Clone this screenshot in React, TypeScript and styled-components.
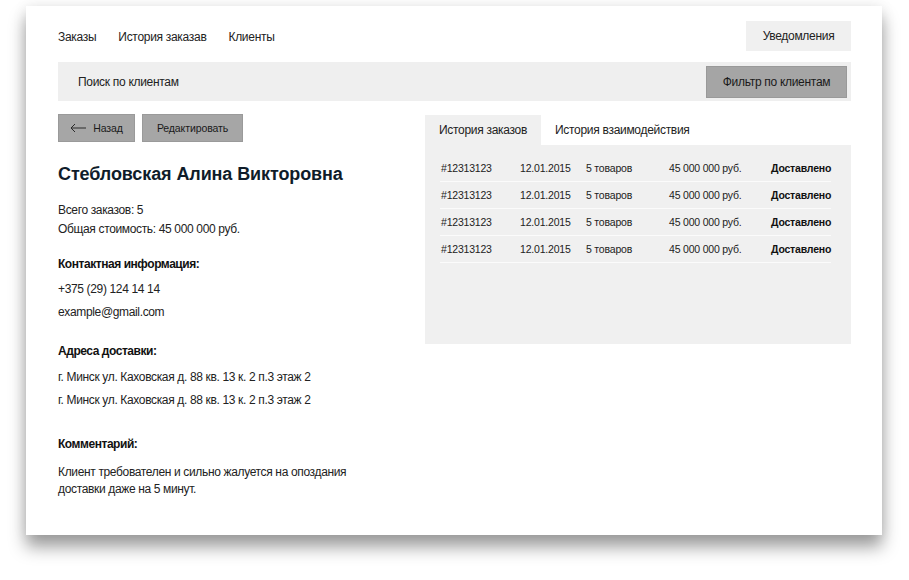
import styled, { createGlobalStyle } from 'styled-components';

const GlobalStyle = createGlobalStyle`
  html, body {
    margin: 0;
    padding: 0;
    background: #ffffff;
  }
  body {
    font-family: "Liberation Sans", Arial, sans-serif;
    color: #1d2a36;
  }
`;

const Page = styled.div`
  padding: 6px 27px 45px 26px;
`;

const Card = styled.div`
  background: #fff;
  height: 529px;
  box-sizing: border-box;
  padding: 15px 31px 0 32px;
  box-shadow: 0 12px 16px rgba(0, 0, 0, 0.38), 0 0 14px rgba(0, 0, 0, 0.08);
`;

const TopBar = styled.div`
  display: flex;
  align-items: center;
  justify-content: space-between;
  height: 30px;
`;

const Nav = styled.nav`
  display: flex;
  gap: 22px;
  padding-top: 2px;
  font-size: 12px;
  letter-spacing: -0.3px;
  color: #222;
`;

const NotifyButton = styled.div`
  background: #f0f0f0;
  height: 30px;
  width: 105px;
  display: flex;
  align-items: center;
  justify-content: center;
  font-size: 12px;
  letter-spacing: -0.3px;
  color: #222;
`;

const SearchBar = styled.div`
  margin-top: 11px;
  height: 39px;
  background: #efefef;
  display: flex;
  align-items: center;
  justify-content: space-between;
  padding: 0 4px 0 20px;
  font-size: 12px;
  letter-spacing: -0.3px;
  color: #222;
`;

const FilterButton = styled.div`
  background: #a5a5a5;
  border: 1px solid #999;
  height: 32px;
  width: 141px;
  box-sizing: border-box;
  display: flex;
  align-items: center;
  justify-content: center;
  color: #1a1a1a;
`;

const Columns = styled.div`
  display: flex;
  justify-content: space-between;
  margin-top: 13px;
`;

const Left = styled.div`
  width: 340px;
`;

const Buttons = styled.div`
  display: flex;
  gap: 7px;
`;

const GreyButton = styled.div<{ $w: number }>`
  width: ${(p) => p.$w}px;
  height: 28px;
  box-sizing: border-box;
  background: #a6a6a6;
  border: 1px solid #9a9a9a;
  display: flex;
  align-items: center;
  justify-content: center;
  gap: 7px;
  font-size: 10.5px;
  letter-spacing: -0.1px;
  color: #1a1a1a;
`;

const Name = styled.h1`
  margin: 21px 0 0;
  font-size: 18px;
  font-weight: bold;
  letter-spacing: -0.1px;
  color: #0f1c2a;
  line-height: 22px;
`;

const Line = styled.div`
  font-size: 12px;
  letter-spacing: -0.35px;
  line-height: 19px;
  color: #222;
`;

const Stats = styled.div`
  margin-top: 16px;
`;

const Heading = styled.div<{ $top: number }>`
  margin-top: ${(p) => p.$top}px;
  font-size: 12px;
  font-weight: bold;
  letter-spacing: -0.45px;
  color: #111;
  line-height: 16px;
`;

const List = styled.div<{ $top: number }>`
  margin-top: ${(p) => p.$top}px;
  display: flex;
  flex-direction: column;
  gap: 4px;
`;

const Comment = styled.div`
  margin-top: 12px;
  font-size: 12px;
  letter-spacing: -0.35px;
  line-height: 17px;
  color: #222;
`;

const Right = styled.div`
  width: 426px;
  margin-top: 1px;
`;

const Tabs = styled.div`
  display: flex;
  height: 30px;
`;

const Tab = styled.div<{ $active?: boolean }>`
  display: flex;
  align-items: center;
  padding: 0 14px;
  white-space: nowrap;
  background: ${(p) => (p.$active ? '#f0f0f0' : 'transparent')};
  font-size: 12px;
  letter-spacing: -0.3px;
  color: #222;
`;

const Panel = styled.div`
  background: #f0f0f0;
  height: 199px;
  padding: 10px 20px 0 15px;
  box-sizing: border-box;
`;

const Row = styled.div`
  display: grid;
  grid-template-columns: 79px 66px 83px 102px 1fr;
  align-items: center;
  height: 26px;
  padding-left: 1px;
  border-bottom: 1px solid #fbfbfb;
  font-size: 10.5px;
  letter-spacing: -0.2px;
  color: #222;
`;

const Status = styled.span`
  font-weight: bold;
  color: #111;
`;

const Arrow = () => (
  <svg width="16" height="10" viewBox="0 0 16 10" fill="none">
    <path d="M5 1 L1 5 L5 9 M1 5 H16" stroke="#2a2a2a" strokeWidth="1" />
  </svg>
);

const orders = [1, 2, 3, 4];

export default function App() {
  return (
    <Page>
      <GlobalStyle />
      <Card>
        <TopBar>
          <Nav>
            <span>Заказы</span>
            <span>История заказав</span>
            <span>Клиенты</span>
          </Nav>
          <NotifyButton>Уведомления</NotifyButton>
        </TopBar>
        <SearchBar>
          <span>Поиск по клиентам</span>
          <FilterButton>Фильтр по клиентам</FilterButton>
        </SearchBar>
        <Columns>
          <Left>
            <Buttons>
              <GreyButton $w={77}>
                <Arrow />
                Назад
              </GreyButton>
              <GreyButton $w={101}>Редактировать</GreyButton>
            </Buttons>
            <Name>Стебловская Алина Викторовна</Name>
            <Stats>
              <Line>Всего заказов: 5</Line>
              <Line>Общая стоимость: 45 000 000 руб.</Line>
            </Stats>
            <Heading $top={17}>Контактная информация:</Heading>
            <List $top={8}>
              <Line>+375 (29) 124 14 14</Line>
              <Line>example@gmail.com</Line>
            </List>
            <Heading $top={21}>Адреса доставки:</Heading>
            <List $top={9}>
              <Line>г. Минск ул. Каховская д. 88 кв. 13 к. 2 п.3 этаж 2</Line>
              <Line>г. Минск ул. Каховская д. 88 кв. 13 к. 2 п.3 этаж 2</Line>
            </List>
            <Heading $top={26}>Комментарий:</Heading>
            <Comment>
              Клиент требователен и сильно жалуется на опоздания
              <br />
              доставки даже на 5 минут.
            </Comment>
          </Left>
          <Right>
            <Tabs>
              <Tab $active>История заказов</Tab>
              <Tab>История взаимодействия</Tab>
            </Tabs>
            <Panel>
              {orders.map((o) => (
                <Row key={o}>
                  <span>#12313123</span>
                  <span>12.01.2015</span>
                  <span>5 товаров</span>
                  <span>45 000 000 руб.</span>
                  <Status>Доставлено</Status>
                </Row>
              ))}
            </Panel>
          </Right>
        </Columns>
      </Card>
    </Page>
  );
}
